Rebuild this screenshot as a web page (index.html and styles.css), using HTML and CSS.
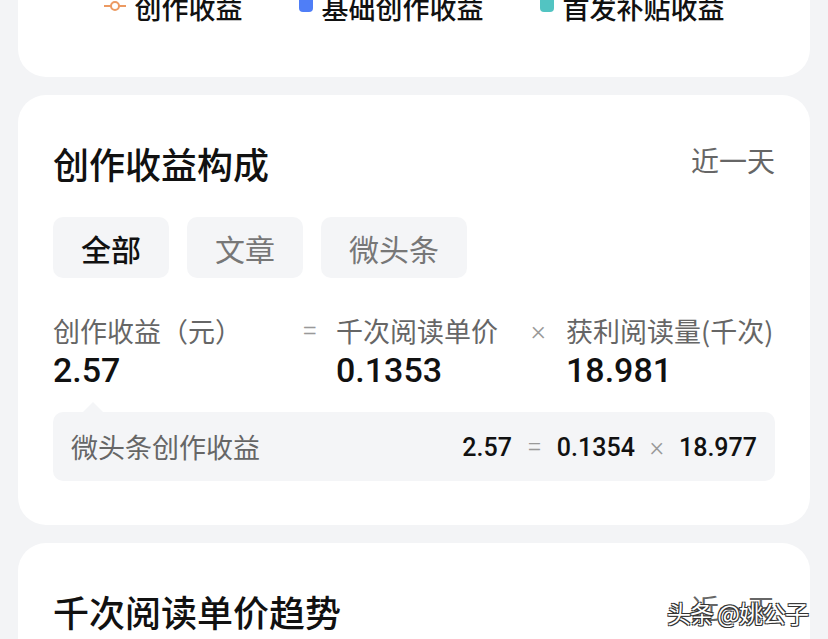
FILE: index.html
```html
<!DOCTYPE html>
<html lang="zh-CN">
<head>
<meta charset="utf-8">
<title>创作收益构成</title>
<link rel="stylesheet" href="styles.css">
</head>
<body>
<div class="page">
  <section class="card card-legend">
    <div class="legend">
      <div class="legend-item">
        <svg class="ico-line" width="22" height="12" viewBox="0 0 22 12"><line x1="0" y1="6" x2="22" y2="6" stroke="#ec9a62" stroke-width="2"/><circle cx="11" cy="6" r="4" fill="#fff" stroke="#ec9a62" stroke-width="2"/></svg>
        <span>创作收益</span>
      </div>
      <div class="legend-item">
        <i class="swatch swatch-blue"></i>
        <span>基础创作收益</span>
      </div>
      <div class="legend-item">
        <i class="swatch swatch-teal"></i>
        <span>首发补贴收益</span>
      </div>
    </div>
  </section>

  <section class="card">
    <header class="card-head">
      <h2 class="card-title">创作收益构成</h2>
      <span class="range">近一天</span>
    </header>
    <div class="tabs">
      <span class="tab tab-active">全部</span>
      <span class="tab">文章</span>
      <span class="tab">微头条</span>
    </div>
    <div class="formula">
      <span class="f-label">创作收益（元）</span>
      <span class="f-op">=</span>
      <span class="f-label">千次阅读单价</span>
      <span class="f-op">×</span>
      <span class="f-label">获利阅读量(千次)</span>
      <span class="f-value">2.57</span>
      <span></span>
      <span class="f-value">0.1353</span>
      <span></span>
      <span class="f-value">18.981</span>
    </div>
    <div class="detail">
      <span class="detail-name">微头条创作收益</span>
      <span class="detail-calc">2.57<em>=</em>0.1354<em>×</em>18.977</span>
    </div>
  </section>

  <section class="card card-trend">
    <header class="card-head">
      <h2 class="card-title">千次阅读单价趋势</h2>
      <span class="range">近一天</span>
    </header>
    <div class="watermark">头条 @姚公子</div>
  </section>
</div>
</body>
</html>
```

FILE: styles.css
```css
* { box-sizing: border-box; }
html, body {
  margin: 0;
  padding: 0;
  background: #f3f4f6;
  font-family: "Noto Sans CJK SC", "Noto Sans", sans-serif;
  color: #111;
}
.page {
  display: flex;
  flex-direction: column;
  gap: 18px;
  padding: 0 18px;
  height: 639px;
  overflow: hidden;
}
.card {
  background: #fff;
  border-radius: 28px;
  padding: 44px 35px 44px;
  position: relative;
  flex: none;
}
.card-legend {
  margin-top: -30px;
  padding: 0 0 50px;
  border-radius: 0 0 28px 28px;
}
.legend {
  display: flex;
  justify-content: center;
  gap: 56px;
  height: 38px;
  margin-top: 19px;
  align-items: center;
  font-size: 27px;
  line-height: 38px;
  font-weight: 500;
}
.legend-item {
  display: flex;
  align-items: center;
  gap: 9px;
}
.ico-line { margin-top: -4px; }
.swatch {
  display: inline-block;
  width: 14px;
  height: 18px;
  border-radius: 4px;
  margin-top: -10px;
}
.swatch-blue { background: #4f7ef7; }
.swatch-teal { background: #52c4c2; }

.card-head {
  display: flex;
  justify-content: space-between;
  align-items: center;
  height: 48px;
}
.card-title {
  margin: 0;
  font-size: 36px;
  line-height: 48px;
  font-weight: 500;
  color: #111;
}
.range {
  font-size: 28px;
  color: #666;
  margin-top: -6px;
}
.tabs {
  display: flex;
  gap: 18px;
  margin-top: 30px;
}
.tab {
  height: 61px;
  padding: 0 28px;
  display: flex;
  align-items: center;
  background: #f4f5f7;
  border-radius: 10px;
  font-size: 30px;
  color: #777;
}
.tab-active { color: #111; font-weight: 500; }

.formula {
  display: grid;
  grid-template-columns: 249px 34px 195px 35px 1fr;
  margin-top: 35px;
}
.f-label {
  font-size: 27px;
  line-height: 36px;
  color: #666;
  white-space: nowrap;
}
.f-op {
  font-family: Roboto, sans-serif;
  font-size: 28px;
  font-weight: 300;
  line-height: 36px;
  color: #999;
}
.f-value {
  font-family: Roboto, "Noto Sans CJK SC", sans-serif;
  font-size: 34px;
  line-height: 42px;
  font-weight: 500;
  color: #111;
}
.detail {
  position: relative;
  margin-top: 21px;
  height: 69px;
  background: #f4f5f7;
  border-radius: 10px;
  padding: 0 18px;
  display: flex;
  justify-content: space-between;
  align-items: center;
}
.detail::before {
  content: "";
  position: absolute;
  top: -10px;
  left: 30px;
  border-left: 10px solid transparent;
  border-right: 10px solid transparent;
  border-bottom: 10px solid #f4f5f7;
}
.detail-name {
  font-size: 27px;
  color: #666;
}
.detail-calc {
  font-family: Roboto, sans-serif;
  font-size: 25px;
  font-weight: 500;
  color: #111;
}
.detail-calc em {
  font-style: normal;
  font-weight: 300;
  font-size: 27px;
  color: #999;
  margin: 0 15px;
}
.card-trend { padding-bottom: 60px; }
.watermark {
  position: absolute;
  right: 2px;
  top: 52px;
  font-size: 24px;
  color: #fff;
  text-shadow: 1px 1px 0 #333, -1px -1px 0 #333, 1px -1px 0 #333, -1px 1px 0 #333;
  letter-spacing: -1px;
}
```
